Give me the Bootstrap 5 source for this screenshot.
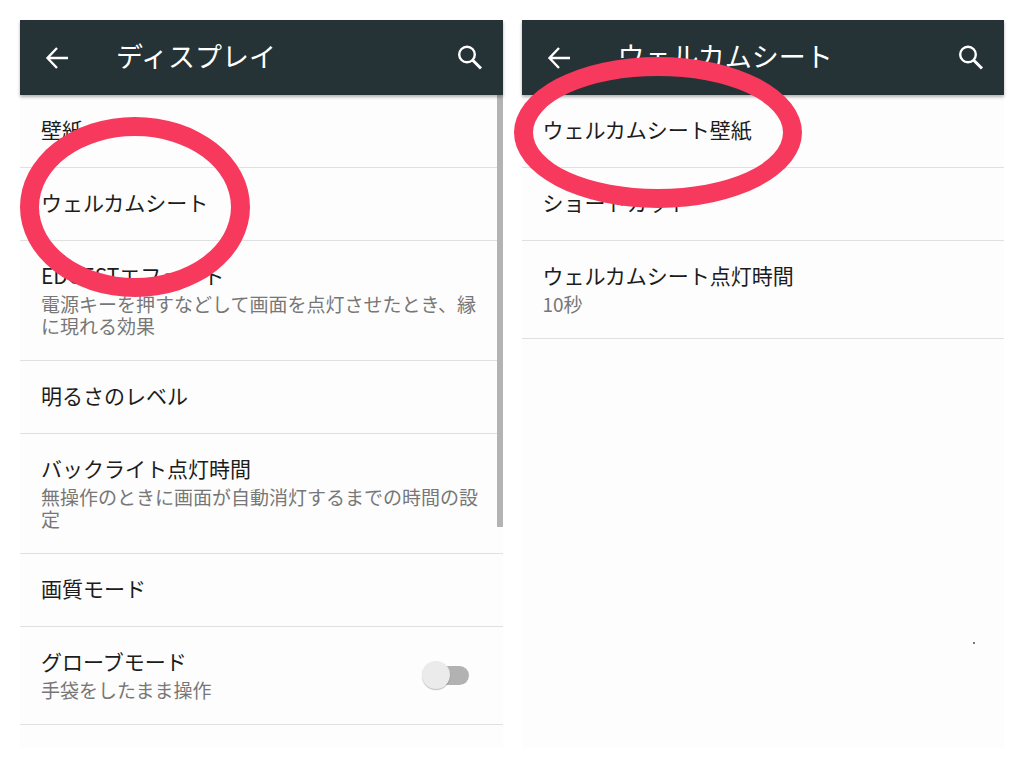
<!DOCTYPE html>
<html lang="ja">
<head>
<meta charset="utf-8">
<meta name="viewport" content="width=device-width, initial-scale=1">
<title>ディスプレイ設定</title>
<link href="https://cdn.jsdelivr.net/npm/bootstrap@5.3.0/dist/css/bootstrap.min.css" rel="stylesheet">
<style>
  body { background: #fff; font-family: "Noto Sans CJK JP", sans-serif; }
  .screens { display: grid; grid-template-columns: 1fr 1fr; gap: 19px; padding: 20px; min-height: 100vh; }
  .screen { background: #fdfdfd; }
  .app-bar { background: #253236; color: #fff; height: 75px; padding: 0 17px 0 21px; box-shadow: 0 2px 3px rgba(0, 0, 0, .3); z-index: 1; }
  .app-bar h1 { font-size: 27px; line-height: 36px; margin-left: 43px; padding-bottom: 4px; font-weight: 400; }
  .icon-btn { color: #fff; width: 32px; height: 32px; }
  .settings { --bs-list-group-bg: transparent; --bs-list-group-color: #1c1c1c; --bs-list-group-border-color: #e0e0e0; }
  .settings .list-group-item { padding: 19px 21px 23px; border-width: 0 0 1px; }
  .settings .list-group-item:last-child { border-bottom-width: 1px; }
  .item-title { font-size: 21px; line-height: 30px; color: #1c1c1c; }
  .item-note { font-size: 19px; line-height: 22px; margin-top: 3px; color: #777; }
  .scroll-thumb { top: 75px; right: 0; width: 6px; height: 432px; background: #b3b3b3; }
  .ring { border: 19px solid #f6395c; border-radius: 50%; z-index: 3; pointer-events: none; }
  .ring-left { left: 0; top: -51px; width: 230px; height: 180px; }
  .ring-right { left: -8px; top: -38px; width: 288px; height: 151px; }
  .glove-switch { appearance: none; position: relative; width: 43px; height: 19px; margin: 4px 13px 0 0; border-radius: 10px; background: #b2b2b2; }
  .glove-switch::before { content: ""; position: absolute; left: -4px; top: -5px; width: 28px; height: 28px; border-radius: 50%; background: #ebebeb; box-shadow: 0 1px 1px rgba(0, 0, 0, .25); }
  .glove-switch:checked::before { left: 19px; }
  .speck { right: 29px; bottom: 104px; width: 2px; height: 2px; background: #777; }
</style>
</head>
<body>
<main class="screens">
  <section class="screen position-relative d-flex flex-column">
    <header class="app-bar d-flex align-items-center position-relative">
      <button type="button" class="icon-btn btn p-0 border-0 d-flex align-items-center justify-content-center" aria-label="戻る">
        <svg width="24" height="24" viewBox="0 0 24 24" fill="none" stroke="currentColor" stroke-width="2.4"><path d="M23 12H3M12 2 2.5 12 12 22"/></svg>
      </button>
      <h1 class="mb-0 me-auto">ディスプレイ</h1>
      <button type="button" class="icon-btn btn p-0 border-0 d-flex align-items-center justify-content-center" aria-label="検索">
        <svg width="26" height="26" viewBox="0 0 26 26" fill="none" stroke="currentColor"><circle cx="10" cy="9.5" r="7.8" stroke-width="2.4"/><path d="m15.5 15 8.5 8.5" stroke-width="3"/></svg>
      </button>
    </header>
    <div class="settings list-group list-group-flush">
      <a href="#" class="list-group-item"><div class="item-title">壁紙</div></a>
      <a href="#" class="list-group-item">
        <div class="item-title">ウェルカムシート</div>
        <span class="ring ring-left position-absolute" aria-hidden="true"></span>
      </a>
      <a href="#" class="list-group-item">
        <div class="item-title">EDGESTエフェクト</div>
        <div class="item-note">電源キーを押すなどして画面を点灯させたとき、縁に現れる効果</div>
      </a>
      <a href="#" class="list-group-item"><div class="item-title">明るさのレベル</div></a>
      <a href="#" class="list-group-item">
        <div class="item-title">バックライト点灯時間</div>
        <div class="item-note">無操作のときに画面が自動消灯するまでの時間の設定</div>
      </a>
      <a href="#" class="list-group-item"><div class="item-title">画質モード</div></a>
      <div class="list-group-item d-flex align-items-center justify-content-between">
        <label for="glove">
          <span class="item-title d-block">グローブモード</span>
          <span class="item-note d-block">手袋をしたまま操作</span>
        </label>
        <input type="checkbox" role="switch" id="glove" class="glove-switch">
      </div>
    </div>
    <span class="scroll-thumb position-absolute" aria-hidden="true"></span>
  </section>

  <section class="screen position-relative d-flex flex-column">
    <header class="app-bar d-flex align-items-center position-relative">
      <button type="button" class="icon-btn btn p-0 border-0 d-flex align-items-center justify-content-center" aria-label="戻る">
        <svg width="24" height="24" viewBox="0 0 24 24" fill="none" stroke="currentColor" stroke-width="2.4"><path d="M23 12H3M12 2 2.5 12 12 22"/></svg>
      </button>
      <h1 class="mb-0 me-auto">ウェルカムシート</h1>
      <button type="button" class="icon-btn btn p-0 border-0 d-flex align-items-center justify-content-center" aria-label="検索">
        <svg width="26" height="26" viewBox="0 0 26 26" fill="none" stroke="currentColor"><circle cx="10" cy="9.5" r="7.8" stroke-width="2.4"/><path d="m15.5 15 8.5 8.5" stroke-width="3"/></svg>
      </button>
    </header>
    <div class="settings list-group list-group-flush overflow-visible">
      <a href="#" class="list-group-item z-2">
        <div class="item-title">ウェルカムシート壁紙</div>
        <span class="ring ring-right position-absolute" aria-hidden="true"></span>
      </a>
      <a href="#" class="list-group-item"><div class="item-title">ショートカット</div></a>
      <a href="#" class="list-group-item">
        <div class="item-title">ウェルカムシート点灯時間</div>
        <div class="item-note">10秒</div>
      </a>
    </div>
    <span class="speck position-absolute" aria-hidden="true"></span>
  </section>
</main>
<script src="https://cdn.jsdelivr.net/npm/bootstrap@5.3.0/dist/js/bootstrap.bundle.min.js"></script>
</body>
</html>
